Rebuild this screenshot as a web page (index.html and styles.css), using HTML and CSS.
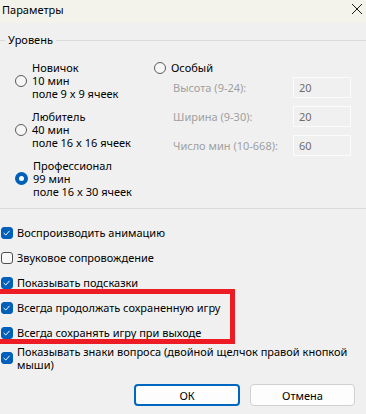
FILE: index.html
```html
<!DOCTYPE html>
<html lang="ru">
<head>
<meta charset="UTF-8">
<meta name="viewport" content="width=device-width, initial-scale=1.0">
<title>Параметры</title>
<link rel="stylesheet" href="styles.css">
</head>
<body>

<div class="window">
  <div class="titlebar">
    <span class="title">Параметры</span>
    <svg class="close" width="12" height="12" viewBox="0 0 12 12">
      <path d="M1 1 L11 11 M11 1 L1 11" stroke="#1a1a1a" stroke-width="1" fill="none"/>
    </svg>
  </div>

  <fieldset class="level">
    <legend>Уровень</legend>
    <div class="level-cols">
      <div class="presets">
        <label class="preset">
          <span class="radio"></span>
          <span class="preset-text">Новичок<br>10 мин<br>поле 9 x 9 ячеек</span>
        </label>
        <label class="preset">
          <span class="radio"></span>
          <span class="preset-text">Любитель<br>40 мин<br>поле 16 x 16 ячеек</span>
        </label>
        <label class="preset">
          <span class="radio checked"></span>
          <span class="preset-text">Профессионал<br>99 мин<br>поле 16 x 30 ячеек</span>
        </label>
      </div>
      <div class="custom">
        <label class="custom-head"><span class="radio"></span>Особый</label>
        <div class="field"><span class="field-label">Высота (9-24):</span><span class="field-box">20</span></div>
        <div class="field"><span class="field-label">Ширина (9-30):</span><span class="field-box">20</span></div>
        <div class="field"><span class="field-label">Число мин (10-668):</span><span class="field-box">60</span></div>
      </div>
    </div>
  </fieldset>

  <div class="options">
    <label class="option"><span class="check on"></span>Воспроизводить анимацию</label>
    <label class="option"><span class="check"></span>Звуковое сопровождение</label>
    <label class="option"><span class="check on"></span>Показывать подсказки</label>
    <div class="marked">
      <label class="option"><span class="check on"></span>Всегда продолжать сохраненную игру</label>
      <label class="option"><span class="check on"></span>Всегда сохранять игру при выходе</label>
    </div>
    <label class="option tall"><span class="check on"></span><span>Показывать знаки вопроса (двойной щелчок правой кнопкой<br>мыши)</span></label>
  </div>

  <div class="buttons">
    <button class="btn primary">ОК</button>
    <button class="btn">Отмена</button>
  </div>
</div>

</body>
</html>
```

FILE: styles.css
```css
body {
  margin: 0;
  font-family: "Noto Sans", sans-serif;
  font-size: 11px;
  color: #000;
  background: #f0f0f0;
}

.window {
  width: 366px;
  height: 414px;
  overflow: hidden;
  background: #f0f0f0;
}

.titlebar {
  height: 23px;
  display: flex;
  align-items: center;
  justify-content: space-between;
  padding: 0 3px 0 2px;
  background: #f3f3ec;
  box-sizing: border-box;
}

.title {
  line-height: 16px;
  margin-top: -4px;
}

.close {
  margin-top: -6px;
}

/* группа "Уровень" */
.level {
  margin: 9px -10px 0 -10px;
  padding: 13px 0 10px 14px;
  border: none;
  border-top: 1px solid #dadada;
  border-bottom: 1px solid #dadada;
}

.level legend {
  padding: 0 3px;
  margin-left: 1px;
  line-height: 16px;
}

.level-cols {
  display: flex;
}

.presets {
  width: 150px;
  padding-left: 11px;
  box-sizing: border-box;
}

.preset {
  display: flex;
  align-items: center;
  gap: 5px;
  line-height: 13px;
  margin-bottom: 10px;
  white-space: nowrap;
}

.preset:last-child {
  margin-bottom: 0;
}

.radio {
  width: 12px;
  height: 12px;
  border: 1px solid #5b5b5b;
  border-radius: 50%;
  background: #f6f6f6;
  box-sizing: border-box;
  flex-shrink: 0;
}

.radio.checked {
  width: 13px;
  height: 13px;
  border: 4px solid #005fb8;
  background: #fff;
}

.custom-head {
  display: flex;
  align-items: center;
  gap: 5px;
  line-height: 13px;
}

.field {
  display: flex;
  align-items: center;
  height: 21px;
  margin-top: 8px;
  padding-left: 19px;
  white-space: nowrap;
}

.custom-head + .field {
  margin-top: 3px;
}

.field-label {
  width: 120px;
  color: #a0a0a0;
}

.field-box {
  width: 58px;
  height: 21px;
  line-height: 19px;
  padding-left: 5px;
  border: 1px solid #fbfbfb;
  box-sizing: border-box;
  color: #6d6d6d;
}

/* флажки */
.options {
  margin-top: 11px;
  padding-left: 1px;
}

.option {
  display: flex;
  align-items: center;
  gap: 4px;
  height: 25px;
  white-space: nowrap;
}

.option.tall {
  height: 26px;
  line-height: 13px;
}

.check {
  width: 12px;
  height: 12px;
  border: 1px solid #4f4f4f;
  border-radius: 3px;
  background: #f8f8f8;
  box-sizing: border-box;
  flex-shrink: 0;
}

.check.on {
  border-color: #005fb8;
  background: #005fb8 url("data:image/svg+xml,%3Csvg xmlns='http://www.w3.org/2000/svg' width='12' height='12' viewBox='0 0 12 12'%3E%3Cpath d='M2.6 6 L4.8 8 L8.6 3.8' stroke='white' stroke-width='1' fill='none'/%3E%3C/svg%3E") center / 12px 12px no-repeat;
}

.marked {
  position: relative;
  width: 234px;
}

.marked::after {
  content: "";
  position: absolute;
  top: -6px;
  bottom: 1px;
  left: -6px;
  right: 0;
  border: 5px solid #ed1c24;
}

/* кнопки */
.buttons {
  display: flex;
  justify-content: flex-end;
  gap: 10px;
  margin-top: 13px;
  padding-right: 11px;
}

.btn {
  width: 105px;
  height: 22px;
  font-family: inherit;
  font-size: 11px;
  background: #fdfdfd;
  border: 1px solid #d0d0d0;
  border-radius: 4px;
  color: #000;
  padding: 0;
}

.btn.primary {
  width: 106px;
  border: 2px solid #0067c0;
}
```
